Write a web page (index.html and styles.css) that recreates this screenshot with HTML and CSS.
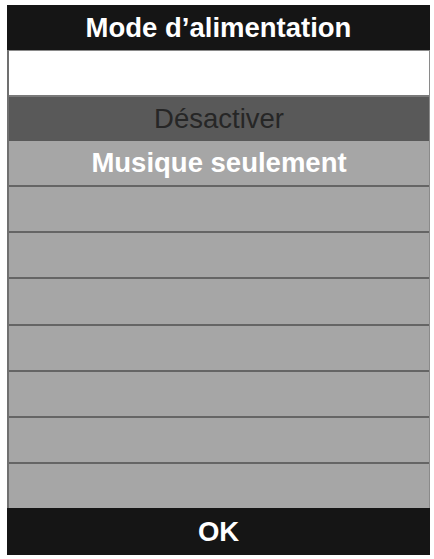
FILE: index.html
```html
<!DOCTYPE html>
<html>
<head>
    <title>Mode d'alimentation</title>
    <link rel="stylesheet" href="styles.css">
</head>
<body>
    <div class="screen">
        <div class="title-bar">Mode d’alimentation</div>
        <div class="menu">
            <div class="row row-blank"></div>
            <div class="row row-off">Désactiver</div>
            <div class="row row-current">Musique seulement</div>
            <div class="row row-line"></div>
            <div class="row row-line"></div>
            <div class="row row-line"></div>
            <div class="row row-line"></div>
            <div class="row row-line"></div>
            <div class="row row-line"></div>
            <div class="row row-line"></div>
        </div>
        <div class="ok-bar">OK</div>
    </div>
</body>
</html>
```

FILE: styles.css
```css
body {
    margin: 0;
    background-color: #fff;
    font-family: "Liberation Sans", Arial, sans-serif;
}

.screen {
    margin: 5px 0 0 7px;
    width: 423px;
    height: 550px;
    display: flex;
    flex-direction: column;
}

.title-bar, .ok-bar {
    background-color: #151515;
    color: #fff;
    font-size: 27.5px;
    font-weight: bold;
    display: flex;
    align-items: center;
    justify-content: center;
}

.title-bar {
    height: 45px;
}

.ok-bar {
    height: 47px;
}

.menu {
    flex: 1;
    display: flex;
    flex-direction: column;
    border-left: 2px solid #707070;
    border-right: 1px solid #8a8a8a;
    background-color: #a6a6a6;
}

.row {
    flex: 1;
    display: flex;
    align-items: center;
    justify-content: center;
    font-size: 27.5px;
    box-sizing: border-box;
}

.row-blank {
    background-color: #fff;
    border-top: 1px solid #8a8a8a;
}

.row-off {
    background-color: #595959;
    color: #262626;
    border-top: 2px solid #7a7a7a;
}

.row-current {
    color: #fff;
    font-weight: bold;
}

.row-line {
    border-top: 2px solid #656565;
}
```
